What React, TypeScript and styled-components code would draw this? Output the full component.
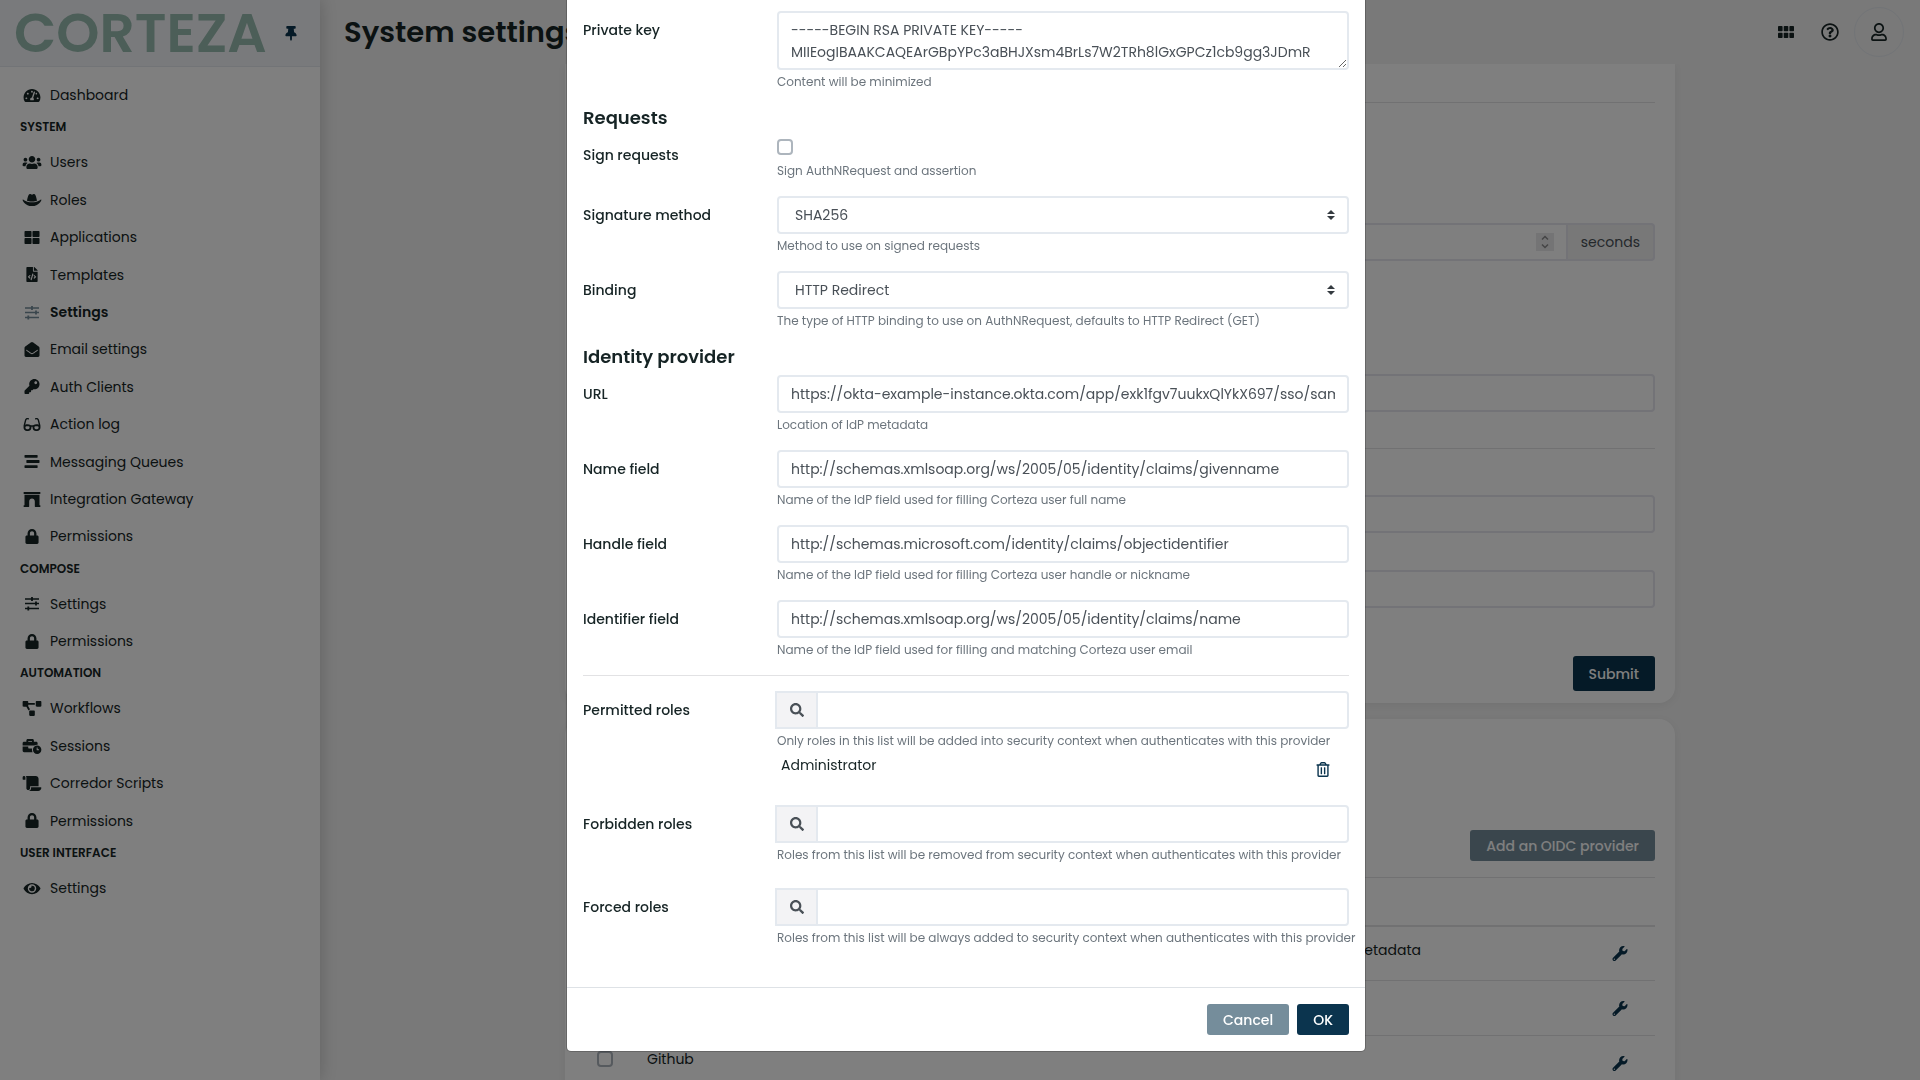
import React, { useState } from "react";
import styled, { createGlobalStyle } from "styled-components";
import {
  FaTachometerAlt, FaUsers, FaHatCowboy, FaThLarge, FaFileCode, FaEnvelopeOpen, FaKey,
  FaGlasses, FaStream, FaArchway, FaLock, FaProjectDiagram, FaBusinessTime, FaScroll,
  FaEye, FaThumbtack, FaRegQuestionCircle, FaRegUser, FaSearch, FaRegTrashAlt, FaWrench,
} from "react-icons/fa";

const color = {
  primary: "#0b344e",
  secondary: "#758d9b",
  text: "#162425",
  muted: "#6c757d",
  field: "#495057",
  border: "#e4e9ef",
  line: "#e2e2e4",
  body: "#f2f2f2",
  light: "#f3f3f5",
};

const GlobalStyle = createGlobalStyle`
  *, *::before, *::after { box-sizing: border-box; }
  body {
    margin: 0;
    overflow: hidden;
    background: ${color.body};
    color: ${color.text};
    font-family: Poppins, Inter, "Liberation Sans", sans-serif;
    font-size: 14px;
    line-height: 22px;
  }
  button, input, select, textarea { font: inherit; }
`;

const Page = styled.div`
  display: flex;
  height: 100vh;
`;

const Sidebar = styled.nav`
  width: 320px;
  flex: none;
  background: #fff;
  box-shadow: 0 0 16px rgba(0, 0, 0, 0.2);
  z-index: 1;
`;

const Brand = styled.div`
  display: flex;
  align-items: center;
  justify-content: space-between;
  height: 67px;
  padding: 0 17px 0 14px;
  background: #f3f4f8;
  border-bottom: 1px solid ${color.border};
`;

const Logo = styled.a`
  color: #98bcb0;
  font-size: 55px;
  font-weight: 600;
  line-height: 66px;
  text-decoration: none;
`;

const IconButton = styled.button`
  display: flex;
  align-items: center;
  justify-content: center;
  padding: 4px;
  border: 0;
  background: none;
  color: ${color.primary};
  svg { width: 16px; height: 15px; }
`;

const Menu = styled.div`
  padding: 10px 20px;
`;

const MenuTitle = styled.h2`
  margin: 0;
  padding: 4px 0 8px;
  font-size: 12px;
  line-height: 18px;
  font-weight: 600;
  text-transform: uppercase;
`;

const MenuList = styled.ul`
  margin: 0;
  padding: 0;
  list-style: none;
`;

const MenuLink = styled.a<{ $active?: boolean }>`
  display: flex;
  align-items: center;
  gap: 6px;
  padding: 7px 0 8px;
  line-height: 1.6;
  color: ${color.text};
  font-weight: ${(p) => (p.$active ? 600 : 400)};
  text-decoration: none;
`;

const MenuIcon = styled.span<{ $active?: boolean }>`
  display: flex;
  justify-content: center;
  width: 24px;
  color: ${(p) => (p.$active ? color.secondary : color.text)};
  svg { flex: none; width: 20px; height: 15px; }
`;

const Main = styled.div`
  display: flex;
  flex-direction: column;
  flex: 1;
  min-width: 0;
`;

const Topbar = styled.header`
  display: flex;
  align-items: center;
  justify-content: space-between;
  flex: none;
  height: 64px;
  padding: 0 16px 0 24px;
`;

const Title = styled.h1`
  margin: 0;
  font-size: 29px;
  line-height: 36px;
  font-weight: 600;
`;

const Tools = styled.div`
  display: flex;
  align-items: center;
  gap: 10px;
`;

const Tool = styled(IconButton)`
  width: 34px;
  height: 34px;
  color: ${color.text};
  svg { width: 18px; height: 18px; }
`;

const Avatar = styled(Tool)`
  width: 50px;
  height: 50px;
  margin-left: -3px;
  border: 1px solid ${color.border};
  border-radius: 50%;
`;

const Content = styled.main`
  flex: 1;
  min-height: 0;
  overflow: hidden;
`;

const Column = styled.div`
  max-width: 1110px;
  margin: 0 auto;
`;

const Card = styled.section<{ $continued?: boolean }>`
  margin-bottom: 16px;
  padding: ${(p) => (p.$continued ? "38px 20px 12px" : "111px 20px 20px")};
  background: #fff;
  border-radius: ${(p) => (p.$continued ? "0 0 16px 16px" : "16px")};
  box-shadow: 0 2px 8px rgba(0, 0, 0, 0.06);
`;

const Rule = styled.hr<{ $after: number }>`
  height: 1px;
  margin: 0 0 ${(p) => p.$after}px;
  border: 0;
  background: ${color.line};
`;

const Setting = styled.div<{ $after: number }>`
  display: flex;
  justify-content: flex-end;
  margin-bottom: ${(p) => p.$after}px;
`;

const SettingField = styled.div`
  position: relative;
  flex: 0 1 75%;
  min-width: 0;
`;

const SettingInput = styled.input<{ $joined?: boolean }>`
  display: block;
  width: 100%;
  height: 38px;
  padding: 6px 12px;
  border: 2px solid #e6e6ef;
  border-right-width: ${(p) => (p.$joined ? 0 : 2)}px;
  border-radius: ${(p) => (p.$joined ? "4px 0 0 4px" : "4px")};
  background: #fff;
  color: ${color.field};
  appearance: textfield;
`;

const Stepper = styled.span`
  position: absolute;
  top: 10px;
  right: 12px;
  display: flex;
  background: #e8e8ea;
  color: #8a8a8c;
`;

const Unit = styled.span`
  display: flex;
  align-items: center;
  padding: 0 13px;
  border: 2px solid #e6e6ef;
  border-radius: 0 4px 4px 0;
  background: #f0f0f0;
  color: ${color.field};
`;

const Button = styled.button<{ $secondary?: boolean; $large?: boolean }>`
  height: ${(p) => (p.$large ? 35 : 31)}px;
  padding: 0 16px;
  border: 0;
  border-radius: 3px;
  background: ${(p) => (p.$secondary ? color.secondary : color.primary)};
  color: #fff;
  font-weight: 500;
`;

const Actions = styled.div<{ $after?: number }>`
  display: flex;
  justify-content: flex-end;
  gap: 8px;
  margin-bottom: ${(p) => p.$after || 0}px;
`;

const Providers = styled.table`
  width: 100%;
  border-collapse: collapse;
  table-layout: fixed;
  th { height: 48px; border-top: 1px solid ${color.line}; border-bottom: 2px solid ${color.line}; }
  td { height: 55px; padding: 12px; vertical-align: top; border-bottom: 1px solid ${color.line}; }
  td:nth-child(3) { padding-right: 0; text-align: right; }
  td:nth-child(4) { padding-right: 23px; vertical-align: middle; }
`;

const Check = styled.input`
  appearance: none;
  display: block;
  width: 16px;
  height: 16px;
  margin: 3px 0 7px;
  border: 2px solid #adb5bd;
  border-radius: 4px;
  background: transparent;
`;

const Backdrop = styled.div`
  position: fixed;
  inset: 0;
  z-index: 10;
  overflow: hidden;
  padding-left: 12px;
  background: rgba(0, 0, 0, 0.5);
`;

const Dialog = styled.form`
  max-width: 800px;
  margin: 0 auto;
  background: #fff;
  border: 1px solid rgba(0, 0, 0, 0.2);
  border-top: 0;
  border-radius: 0 0 5px 5px;
  background-clip: padding-box;
`;

const DialogBody = styled.div`
  padding: 11px 16px 16px;
`;

const DialogFooter = styled.footer`
  padding: 16px;
  border-top: 1px solid #dee2e6;
`;

const Group = styled.div`
  display: grid;
  grid-template-columns: 194px minmax(0, 1fr);
  margin-bottom: 16px;
`;

const Label = styled.label`
  padding-top: 8px;
  font-weight: 500;
`;

const Help = styled.small`
  display: block;
  margin-top: 3px;
  color: ${color.muted};
  font-size: 12px;
  line-height: 18px;
  white-space: nowrap;
`;

const SectionTitle = styled.h2`
  margin: 0 0 7px;
  font-size: 18px;
  line-height: 22px;
  font-weight: 600;
`;

const Field = styled.input`
  display: block;
  width: 100%;
  height: 38px;
  padding: 6px 12px;
  border: 2px solid ${color.border};
  border-radius: 4px;
  background: #fff;
  color: ${color.field};
`;

const Area = styled.textarea`
  display: block;
  width: 100%;
  height: 59px;
  padding: 6px 12px;
  overflow: hidden;
  border: 2px solid ${color.border};
  border-radius: 4px;
  background: #fff;
  color: ${color.field};
  line-height: 22px;
`;

const SelectWrap = styled.div`
  position: relative;
  svg { position: absolute; top: 14px; right: 14px; pointer-events: none; }
`;

const Select = styled.select`
  appearance: none;
  display: block;
  width: 100%;
  height: 38px;
  padding: 0 32px 0 16px;
  border: 2px solid ${color.border};
  border-radius: 4px;
  background: #fff;
  color: ${color.field};
`;

const SearchBox = styled.div`
  display: flex;
  height: 38px;
  margin-left: -2px;
`;

const SearchIcon = styled.span`
  display: flex;
  align-items: center;
  justify-content: center;
  flex: none;
  width: 41px;
  border: 2px solid ${color.border};
  border-right: 0;
  background: ${color.light};
  color: ${color.field};
  svg { width: 14px; height: 14px; }
`;

const SearchField = styled(Field)`
  border-radius: 0 4px 4px 0;
`;

const Roles = styled.ul`
  min-height: 8px;
  margin: 0;
  padding: 0;
  list-style: none;
`;

const Role = styled.li`
  display: flex;
  align-items: flex-start;
  justify-content: space-between;
  height: 39px;
  padding: 4px 14px 4px 4px;
  button { align-self: center; }
`;

const SlidersIcon = () => (
  <svg viewBox="0 0 15 15" fill="none" stroke="currentColor">
    <path d="M0.500 3h14M0.500 7.500h14M0.500 12.500h14" strokeWidth="1.400" />
    <path d="M7.500 1v4M11.500 5.500v4M3.800 10.500v4" strokeWidth="1.800" />
  </svg>
);

const AppsIcon = () => (
  <svg viewBox="0 0 16 18" fill="currentColor">
    {[0, 5.7, 11.4].map((x) => [3, 9.8].map((y) => (
      <rect key={`${x}-${y}`} x={x} y={y} width="4.6" height="5.2" rx="0.8" />
    )))}
  </svg>
);

const menu: { title?: string; items: [React.ComponentType, string, boolean?][] }[] = [
  { items: [[FaTachometerAlt, "Dashboard"]] },
  {
    title: "System",
    items: [
      [FaUsers, "Users"], [FaHatCowboy, "Roles"], [FaThLarge, "Applications"],
      [FaFileCode, "Templates"], [SlidersIcon, "Settings", true], [FaEnvelopeOpen, "Email settings"],
      [FaKey, "Auth Clients"], [FaGlasses, "Action log"], [FaStream, "Messaging Queues"],
      [FaArchway, "Integration Gateway"], [FaLock, "Permissions"],
    ],
  },
  { title: "Compose", items: [[SlidersIcon, "Settings"], [FaLock, "Permissions"]] },
  {
    title: "Automation",
    items: [
      [FaProjectDiagram, "Workflows"], [FaBusinessTime, "Sessions"],
      [FaScroll, "Corredor Scripts"], [FaLock, "Permissions"],
    ],
  },
  { title: "User Interface", items: [[FaEye, "Settings"]] },
];

const idpFields = [
  ["url", "URL", "https://okta-example-instance.okta.com/app/exk1fgv7uukxQlYkX697/sso/saml/metadata", "Location of IdP metadata"],
  ["name", "Name field", "http://schemas.xmlsoap.org/ws/2005/05/identity/claims/givenname", "Name of the IdP field used for filling Corteza user full name"],
  ["handle", "Handle field", "http://schemas.microsoft.com/identity/claims/objectidentifier", "Name of the IdP field used for filling Corteza user handle or nickname"],
  ["identifier", "Identifier field", "http://schemas.xmlsoap.org/ws/2005/05/identity/claims/name", "Name of the IdP field used for filling and matching Corteza user email"],
];

const privateKey =
  "-----BEGIN RSA PRIVATE KEY-----\nMIIEogIBAAKCAQEArGBpYPc3aBHJXsm4BrLs7W2TRh8lGxGPCz1cb9gg3JDmR\nxwsfc";

function SelectField({ id, label, help, options }: { id: string; label: string; help: string; options: string[] }) {
  return (
    <Group>
      <Label htmlFor={id}>{label}</Label>
      <div>
        <SelectWrap>
          <Select id={id}>{options.map((o) => <option key={o}>{o}</option>)}</Select>
          <svg width="8" height="10" viewBox="0 0 4 5" fill="#343a40"><path d="M2 0L0 2h4zm0 5L0 3h4z" /></svg>
        </SelectWrap>
        <Help>{help}</Help>
      </div>
    </Group>
  );
}

function RoleField({ id, label, help, initial = [] }: { id: string; label: string; help: string; initial?: string[] }) {
  const [roles, setRoles] = useState(initial);
  return (
    <Group>
      <Label htmlFor={id}>{label}</Label>
      <div>
        <SearchBox>
          <SearchIcon><FaSearch /></SearchIcon>
          <SearchField id={id} type="text" />
        </SearchBox>
        <Help>{help}</Help>
        <Roles>
          {roles.map((r) => (
            <Role key={r}>
              {r}
              <IconButton type="button" aria-label={`Remove ${r}`} onClick={() => setRoles(roles.filter((x) => x !== r))}>
                <FaRegTrashAlt />
              </IconButton>
            </Role>
          ))}
        </Roles>
      </div>
    </Group>
  );
}

const providers = [["SAML", "metadata"], ["Google", ""], ["Github", ""]];

export default function App() {
  return (
    <>
      <GlobalStyle />
      <Page>
        <Sidebar>
          <Brand>
            <Logo href="#">CORTEZA</Logo>
            <IconButton aria-label="Pin sidebar"><FaThumbtack /></IconButton>
          </Brand>
          <Menu>
            {menu.map((section, i) => (
              <div key={i}>
                {section.title && <MenuTitle>{section.title}</MenuTitle>}
                <MenuList>
                  {section.items.map(([Icon, name, active]) => (
                    <li key={name}>
                      <MenuLink href="#" $active={active}>
                        <MenuIcon $active={active}><Icon /></MenuIcon>
                        {name}
                      </MenuLink>
                    </li>
                  ))}
                </MenuList>
              </div>
            ))}
          </Menu>
        </Sidebar>
        <Main>
          <Topbar>
            <Title>System settings</Title>
            <Tools>
              <Tool aria-label="Applications"><AppsIcon /></Tool>
              <Tool aria-label="Help"><FaRegQuestionCircle /></Tool>
              <Avatar aria-label="Profile"><FaRegUser /></Avatar>
            </Tools>
          </Topbar>
          <Content>
            <Column>
              <Card $continued>
                <Rule $after={120} />
                <Setting $after={113}>
                  <SettingField>
                    <SettingInput $joined type="number" aria-label="Expiration" />
                    <Stepper>
                      <svg width="18" height="18" viewBox="0 0 18 18" fill="none" stroke="currentColor" strokeWidth="1.5">
                        <path d="M6 6.500l3-3 3 3M6 11.500l3 3 3-3" />
                      </svg>
                    </Stepper>
                  </SettingField>
                  <Unit>seconds</Unit>
                </Setting>
                <Setting $after={36}>
                  <SettingField><SettingInput type="text" aria-label="From address" /></SettingField>
                </Setting>
                <Rule $after={46} />
                <Setting $after={37}>
                  <SettingField><SettingInput type="text" aria-label="From name" /></SettingField>
                </Setting>
                <Setting $after={48}>
                  <SettingField><SettingInput type="text" aria-label="Reply address" /></SettingField>
                </Setting>
                <Actions><Button $large>Submit</Button></Actions>
              </Card>
              <Card>
                <Actions $after={16}><Button $secondary>Add an OIDC provider</Button></Actions>
                <Providers>
                  <colgroup>
                    <col style={{ width: 50 }} />
                    <col />
                    <col />
                    <col style={{ width: 234 }} />
                  </colgroup>
                  <thead><tr><th /><th /><th /><th /></tr></thead>
                  <tbody>
                    {providers.map(([name, info]) => (
                      <tr key={name}>
                        <td><Check type="checkbox" aria-label={`Enable ${name}`} /></td>
                        <td>{name}</td>
                        <td>{info}</td>
                        <td>
                          <Actions>
                            <IconButton aria-label={`Configure ${name}`}><FaWrench /></IconButton>
                          </Actions>
                        </td>
                      </tr>
                    ))}
                  </tbody>
                </Providers>
              </Card>
            </Column>
          </Content>
        </Main>
      </Page>
      <Backdrop>
        <Dialog role="dialog" aria-label="SAML provider" onSubmit={(e) => e.preventDefault()}>
          <DialogBody>
            <Group>
              <Label htmlFor="key">Private key</Label>
              <div>
                <Area id="key" defaultValue={privateKey} />
                <Help>Content will be minimized</Help>
              </div>
            </Group>
            <SectionTitle>Requests</SectionTitle>
            <Group>
              <Label htmlFor="sign">Sign requests</Label>
              <div>
                <Check id="sign" type="checkbox" />
                <Help>Sign AuthNRequest and assertion</Help>
              </div>
            </Group>
            <SelectField id="method" label="Signature method" help="Method to use on signed requests" options={["SHA256", "SHA512"]} />
            <SelectField
              id="binding"
              label="Binding"
              help="The type of HTTP binding to use on AuthNRequest, defaults to HTTP Redirect (GET)"
              options={["HTTP Redirect", "HTTP POST"]}
            />
            <SectionTitle>Identity provider</SectionTitle>
            {idpFields.map(([id, label, value, help]) => (
              <Group key={id}>
                <Label htmlFor={id}>{label}</Label>
                <div>
                  <Field id={id} type="text" defaultValue={value} />
                  <Help>{help}</Help>
                </div>
              </Group>
            ))}
            <Rule $after={15} />
            <RoleField
              id="permitted"
              label="Permitted roles"
              help="Only roles in this list will be added into security context when authenticates with this provider"
              initial={["Administrator"]}
            />
            <RoleField
              id="forbidden"
              label="Forbidden roles"
              help="Roles from this list will be removed from security context when authenticates with this provider"
            />
            <RoleField
              id="forced"
              label="Forced roles"
              help="Roles from this list will be always added to security context when authenticates with this provider"
            />
          </DialogBody>
          <DialogFooter>
            <Actions>
              <Button type="button" $secondary>Cancel</Button>
              <Button type="submit">OK</Button>
            </Actions>
          </DialogFooter>
        </Dialog>
      </Backdrop>
    </>
  );
}
